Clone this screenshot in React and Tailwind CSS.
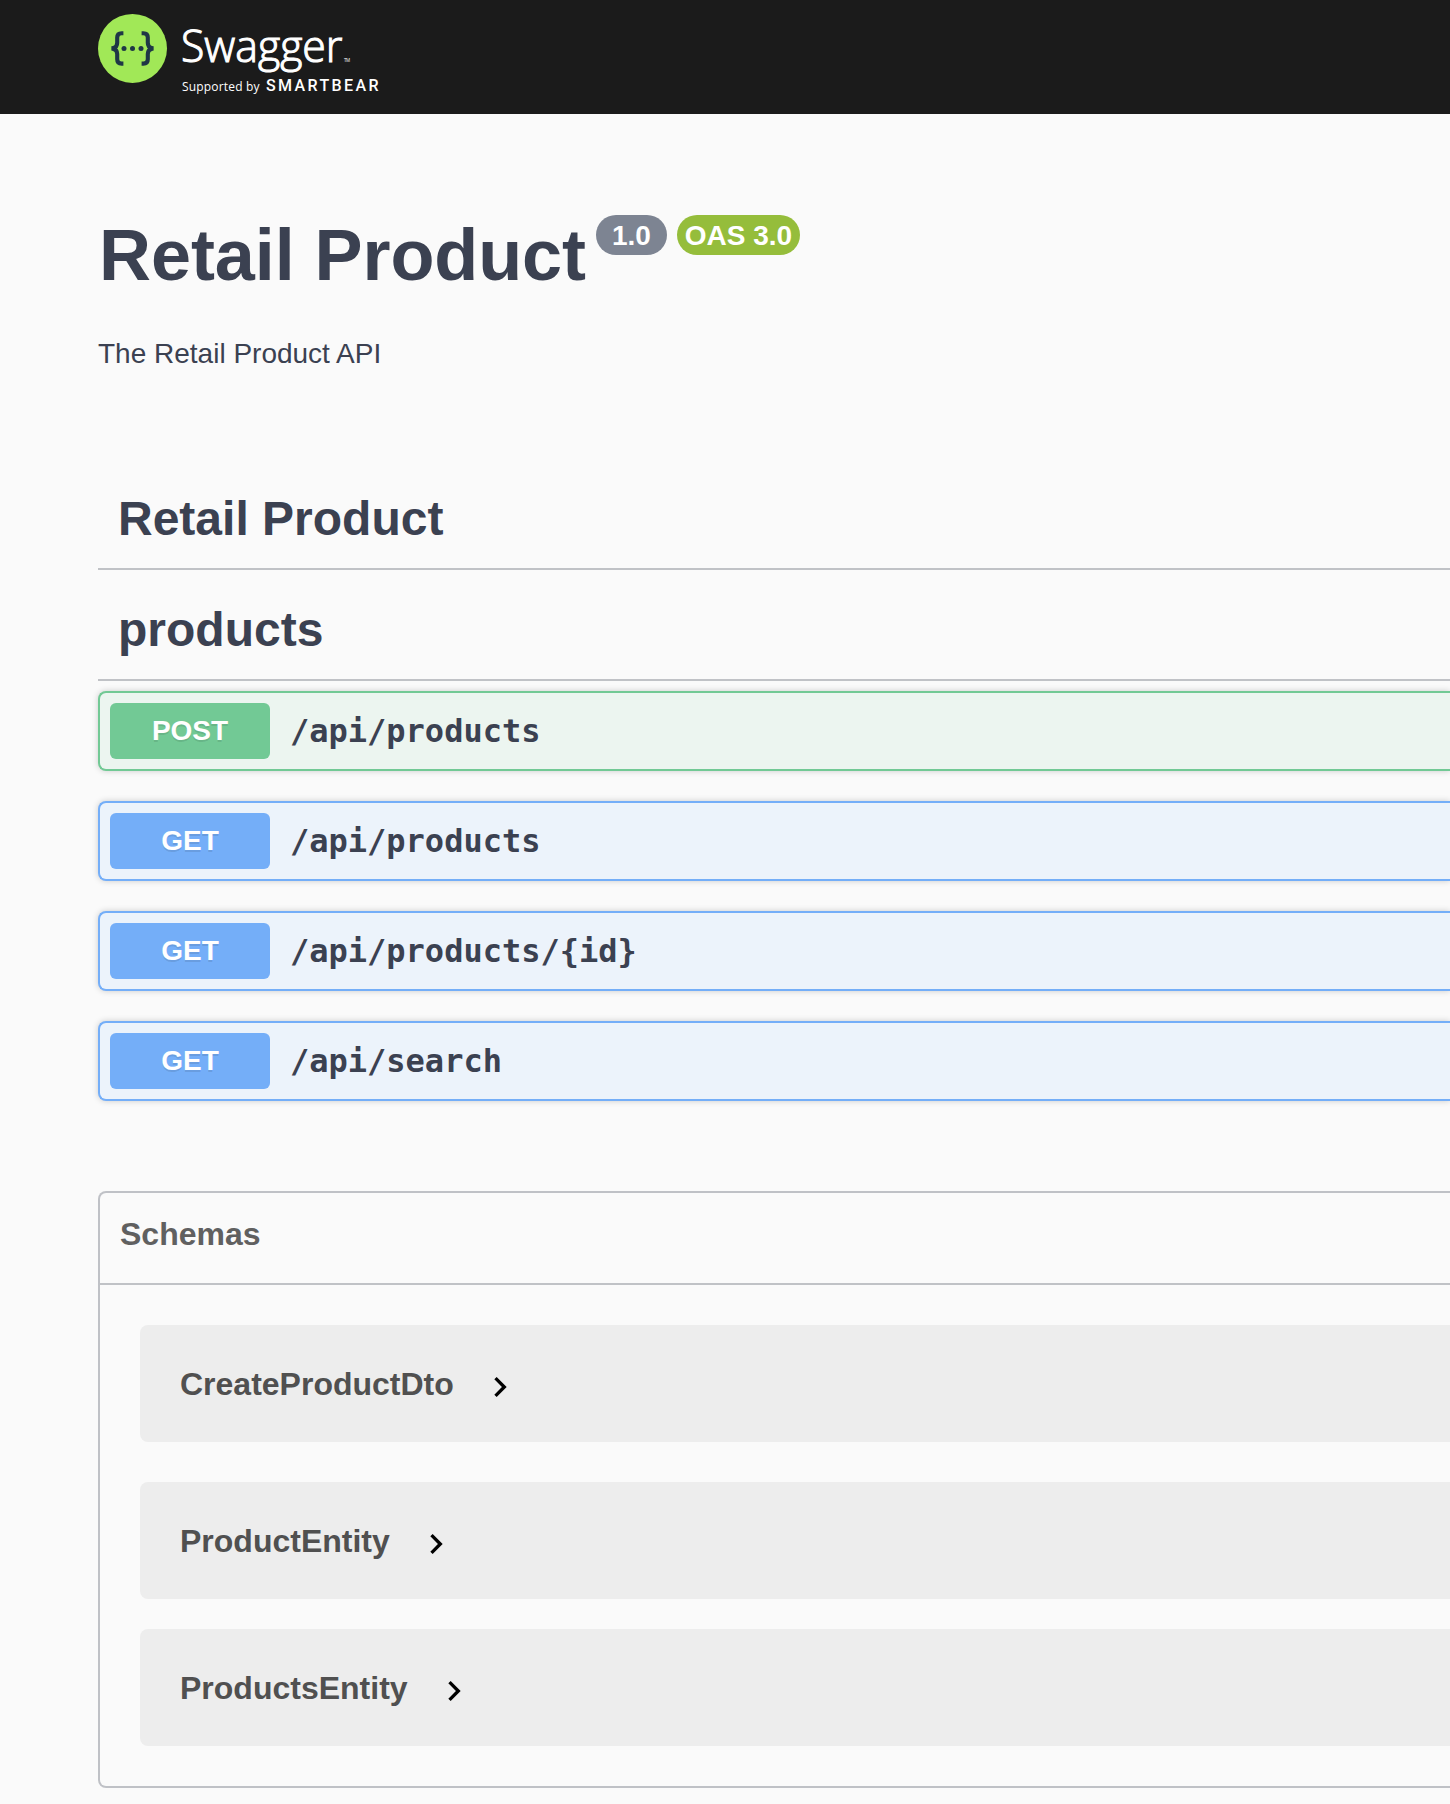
const operations = [
  { method: "POST", path: "/api/products" },
  { method: "GET", path: "/api/products" },
  { method: "GET", path: "/api/products/{id}" },
  { method: "GET", path: "/api/search" },
];

const styles = {
  POST: { box: "border-[#72c995] bg-[#ecf5f0]", tag: "bg-[#72c995]" },
  GET: { box: "border-[#74aef8] bg-[#ecf3fb]", tag: "bg-[#74aef8]" },
};

function Logo() {
  return (
    <svg width="300" height="114" viewBox="0 0 300 114" className="block" fill="#fff">
      <circle cx="34.5" cy="48.4" r="34.5" fill="#a1e857" />
      <g fill="none" stroke="#1f3746" strokeWidth="4.1">
        <path d="M25.4 33.2h-1.8q-4.4 0-4.4 4.4v5.2q0 4.4-3.8 5.1v1q3.8 .7 3.8 5.1v5.2q0 4.4 4.4 4.4h1.8" />
        <path d="M43.6 33.2h1.8q4.4 0 4.4 4.4v5.2q0 4.4 3.8 5.1v1q-3.8 .7-3.8 5.1v5.2q0 4.4-4.4 4.4h-1.8" />
      </g>
      <g fill="#1f3746">
        <circle cx="26" cy="48.4" r="2.5" />
        <circle cx="34.5" cy="48.4" r="2.5" />
        <circle cx="43" cy="48.4" r="2.5" />
      </g>
      <text x="83" y="62.4" fontFamily="'Open Sans', sans-serif" fontWeight="300" fontSize="44" textLength="161.5" lengthAdjust="spacingAndGlyphs" stroke="#fff" strokeWidth="1.1">Swagger</text>
      <text x="246" y="62" fontFamily="'Open Sans', sans-serif" fontSize="4.5" textLength="6">TM</text>
      <text x="84" y="90.8" fontFamily="'Open Sans', sans-serif" fontSize="12" textLength="77.5">Supported by</text>
      <text x="168" y="90.5" fontFamily="Roboto, sans-serif" fontWeight="500" fontSize="16" textLength="112.5">SMARTBEAR</text>
    </svg>
  );
}

function Arrow() {
  return (
    <svg width="40" height="40" viewBox="0 0 24 24" className="mt-[42px] ml-[26px] shrink-0">
      <path d="M10 6L8.59 7.41 13.17 12l-4.58 4.59L10 18l6-6z" />
    </svg>
  );
}

function Operation({ method, path }) {
  return (
    <div className={`flex h-20 items-center rounded-l-lg border-2 border-r-0 pl-2.5 shadow-[0_0_6px_rgba(0,0,0,0.19)] ${styles[method].box}`}>
      <span className={`h-14 w-40 rounded-md text-center text-[28px] leading-[56px] font-bold text-white [text-shadow:0_2px_0_rgba(0,0,0,0.1)] ${styles[method].tag}`}>
        {method}
      </span>
      <span className="pl-5 font-['DejaVu_Sans_Mono',monospace] text-[32px] leading-[38px] font-bold">{path}</span>
    </div>
  );
}

function Tag({ children }) {
  return <h2 className="h-20 border-b-2 border-[#3b4151]/30 pl-5 text-[48px] leading-[58px] font-bold">{children}</h2>;
}

function Schema({ name, className }) {
  return (
    <div className={`flex h-[117px] rounded-l-lg bg-[#ededed] pl-10 ${className}`}>
      <span className="pt-[40px] text-[32px] leading-[38px] font-bold text-[#505050]">{name}</span>
      <Arrow />
    </div>
  );
}

export default function App() {
  return (
    <div className="h-[1804px] w-full overflow-hidden bg-[#fafafa] font-['Liberation_Sans',sans-serif] text-[#3b4151]">
      <header className="h-[114px] bg-[#1b1b1b] pl-[98px]">
        <Logo />
      </header>
      <main className="pl-[98px]">
        <div className="flex pt-[101px]">
          <h1 className="pl-px text-[72px] leading-[80px] font-bold tracking-[-0.08px]">Retail Product</h1>
          <span className="ml-[10px] h-10 w-[71px] rounded-full bg-[#7d8492] text-center text-[28px] leading-[41px] font-bold text-white">1.0</span>
          <span className="ml-[10px] h-10 w-[123px] rounded-full bg-[#95bd3b] text-center text-[28px] leading-[41px] font-bold text-white">OAS 3.0</span>
        </div>
        <p className="mt-[43px] text-[28px] leading-8">The Retail Product API</p>
        <section className="flex flex-col pt-[120px]">
          <Tag>Retail Product</Tag>
          <div className="pt-[31px]">
            <Tag>products</Tag>
          </div>
          <div className="flex flex-col gap-[30px] pt-[10px]">
            {operations.map((op) => (
              <Operation key={op.method + op.path} {...op} />
            ))}
          </div>
        </section>
        <section className="mt-[90px] h-[597px] rounded-l-lg border-2 border-r-0 border-[#3b4151]/30">
          <h3 className="h-[92px] border-b-2 border-[#3b4151]/30 pt-[22px] pl-5 text-[32px] leading-[38px] font-bold text-[#606060]">Schemas</h3>
          <div className="pt-10 pl-10">
            <Schema name="CreateProductDto" className="" />
            <Schema name="ProductEntity" className="mt-10" />
            <Schema name="ProductsEntity" className="mt-[30px]" />
          </div>
        </section>
      </main>
    </div>
  );
}
